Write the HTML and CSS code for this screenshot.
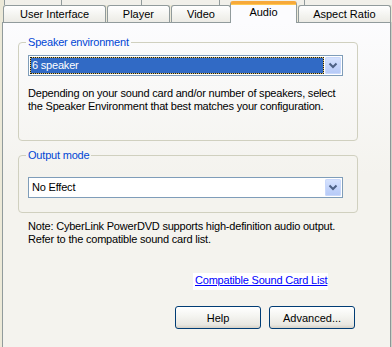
FILE: index.html
```html
<!DOCTYPE html>
<html lang="en">

<head>
    <meta charset="UTF-8">
    <meta name="viewport" content="width=device-width, initial-scale=1.0">
    <title>Audio</title>
    <link rel="stylesheet" href="styles.css">
</head>

<body>
    <div class="tabs-back">
        <span class="stub stub-1"></span>
        <span class="stub stub-2"></span>
        <span class="stub stub-3"></span>
        <span class="stub stub-4"></span>
        <span class="stub stub-5"></span>
    </div>

    <div class="tabs">
        <div class="tab tab-ui">User Interface</div>
        <div class="tab tab-player">Player</div>
        <div class="tab tab-video">Video</div>
        <div class="tab tab-audio active">Audio</div>
        <div class="tab tab-aspect">Aspect Ratio</div>
    </div>

    <div class="pane">
        <fieldset class="group group-speaker">
            <legend>Speaker environment</legend>
            <div class="combo">
                <span class="combo-value focused">6 speaker</span>
                <span class="combo-btn">
                    <svg width="16" height="17" viewBox="0 0 16 17">
                        <polyline points="4.5,6.5 8,10 11.5,6.5" fill="none" stroke="#4d6185" stroke-width="2" />
                    </svg>
                </span>
            </div>
            <p class="hint">Depending on your sound card and/or number of speakers, select<br>the Speaker Environment that best matches your configuration.</p>
        </fieldset>

        <fieldset class="group group-output">
            <legend>Output mode</legend>
            <div class="combo">
                <span class="combo-value">No Effect</span>
                <span class="combo-btn">
                    <svg width="16" height="17" viewBox="0 0 16 17">
                        <polyline points="4.5,6.5 8,10 11.5,6.5" fill="none" stroke="#4d6185" stroke-width="2" />
                    </svg>
                </span>
            </div>
        </fieldset>

        <p class="note">Note: CyberLink PowerDVD supports high-definition audio output.<br>Refer to the compatible sound card list.</p>

        <div class="link-row">
            <a href="#" class="link">Compatible Sound Card List</a>
        </div>

        <div class="buttons">
            <button class="btn">Help</button>
            <button class="btn">Advanced...</button>
        </div>
    </div>
</body>

</html>
```

FILE: styles.css
```css
body {
    margin: 0;
    width: 392px;
    height: 347px;
    overflow: hidden;
    background-color: #ece9d8;
    font-family: "Liberation Sans", Arial, sans-serif;
    font-size: 11px;
    line-height: 13px;
    color: #000;
}

/* first row of tabs, only the bottom edge shows */
.tabs-back {
    display: flex;
    height: 5px;
    padding-left: 4px;
}

.stub {
    border-left: 1px solid #919b9c;
    border-right: 1px solid #919b9c;
    background: #f1f0ea;
    margin-right: -1px;
    box-sizing: border-box;
}

.stub-1 { width: 59px; }
.stub-2 { width: 82px; }
.stub-3 { width: 80px; }
.stub-4 { width: 87px; }
.stub-5 { width: 90px; }

.tabs {
    display: flex;
    align-items: flex-start;
    height: 18px;
    margin-bottom: -1px;
    padding-left: 3px;
    position: relative;
    z-index: 1;
}

.tab {
    box-sizing: border-box;
    height: 17px;
    border: 1px solid #919b9c;
    border-bottom: none;
    border-radius: 3px 3px 0 0;
    background: linear-gradient(#ffffff, #f3f3ef 60%, #ecebe5);
    text-align: center;
    line-height: 16px;
    margin-right: 1px;
}

.tab-ui { width: 104px; }
.tab-player { width: 63px; }
.tab-video { width: 61px; margin-right: 0; }
.tab-aspect { width: 94px; }

.tab.active {
    width: 67px;
    height: 22px;
    margin-top: -4px;
    margin-left: -1px;
    border-top: 3px solid #f7a93a;
    box-shadow: inset 0 1px 0 #ffc850;
    background: #fcfcfe;
    line-height: 17px;
    border-radius: 3px 3px 0 0;
}

.pane {
    box-sizing: border-box;
    width: 389px;
    height: 340px;
    margin-left: 2px;
    border: 1px solid #919b9c;
    border-right-color: #8c9698;
    box-shadow: 1px 0 0 #d0cfc6;
    background: linear-gradient(#fcfcfe, #f4f3ee 45%);
    padding: 13px 0 0 15px;
    letter-spacing: -0.2px;
}

.group {
    box-sizing: border-box;
    width: 340px;
    margin: 0;
    border: 1px solid #d0d0bf;
    border-radius: 4px;
    padding: 6px 14px 27px 9px;
}

.group legend {
    color: #0046d5;
    padding: 0 2px;
    margin-left: -2px;
}

.group-output {
    margin-top: 8px;
    padding-top: 15px;
    padding-bottom: 14px;
}

.combo {
    box-sizing: border-box;
    display: flex;
    width: 315px;
    height: 21px;
    border: 1px solid #7f9db9;
    background: #fff;
    padding: 1px;
}

.combo-value {
    flex: 1;
    line-height: 17px;
    padding-left: 2px;
}

.combo-value.focused {
    box-sizing: border-box;
    color: #fff;
    line-height: 15px;
    border: 1px dotted #1a1a1a;
    background: linear-gradient(#316ac5, #316ac5) padding-box, linear-gradient(#d8bf6a, #d8bf6a) border-box;
    margin-right: 1px;
    padding-left: 1px;
}

.combo-btn {
    box-sizing: border-box;
    width: 16px;
    height: 17px;
    border-radius: 2px;
    background: linear-gradient(#d8e4fe, #c3d4fb 55%, #b5c9f7);
    box-shadow: inset 0 0 0 1px #c9d8fb;
}

.combo-btn svg {
    display: block;
}

.hint {
    margin: 11px 0 0 0;
    white-space: nowrap;
}

.note {
    margin: 7px 0 0 10px;
    white-space: nowrap;
}

.link-row {
    margin-top: 27px;
    padding-left: 175px;
}

.link {
    display: inline-block;
    background: #fff;
    color: #0000ff;
    padding: 1px 1px 3px 2px;
}

.buttons {
    display: flex;
    gap: 8px;
    margin-top: 16px;
    padding-left: 157px;
}

.btn {
    box-sizing: border-box;
    width: 86px;
    height: 23px;
    border: 1px solid #003c74;
    border-radius: 3px;
    background: linear-gradient(#ffffff, #f4f4f0 45%, #e8e7e1 85%, #d6d0c5);
    font-family: "Liberation Sans", Arial, sans-serif;
    font-size: 11px;
    color: #000;
    padding: 0;
}
```
